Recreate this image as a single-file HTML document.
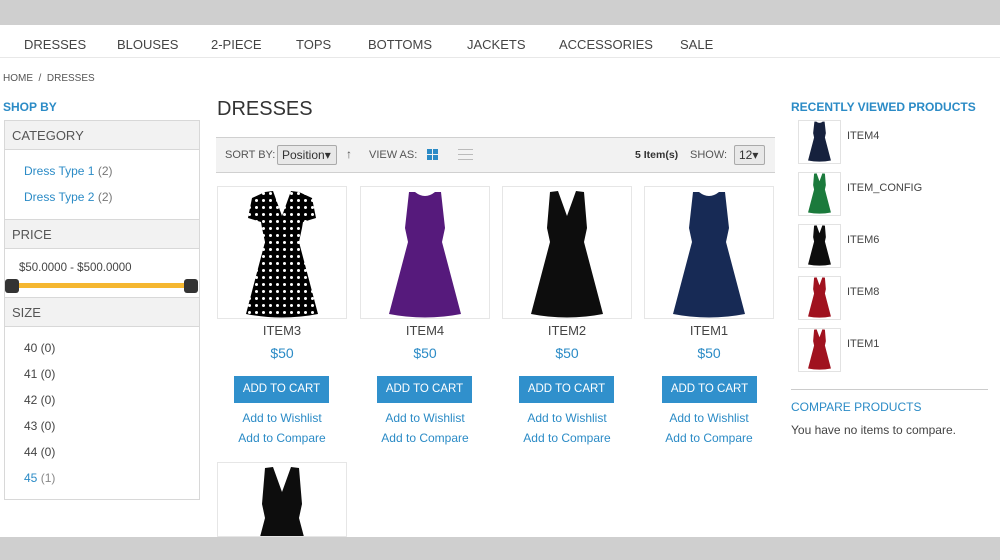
<!DOCTYPE html>
<html><head><meta charset="utf-8"><style>
*{margin:0;padding:0;box-sizing:border-box}
html,body{width:1000px;height:560px;overflow:hidden}
body{background:#fff;font-family:"Liberation Sans",sans-serif;position:relative;color:#444}
.a{position:absolute;white-space:nowrap}
.gray{background:#cfcfcf;left:0;width:1000px;z-index:5}
.nav{font-size:13px;color:#444;top:37px}
.blue{color:#2b8bc6}
.hd{position:absolute;left:5px;width:194px;height:30px;background:#f2f2f2;border-top:1px solid #d8d8d8;border-bottom:1px solid #d8d8d8;font-size:13px;color:#555;padding:7px 0 0 7px}
.sz{font-size:12px;color:#444;left:24px}
.card{position:absolute;top:186px;width:130px;height:133px;border:1px solid #e6e6e6;background:#fff;overflow:hidden}
.nm{font-size:13px;color:#444;text-align:center;width:130px}
.pr{font-size:14px;color:#2b8bc6;text-align:center;width:130px}
.btn{position:absolute;width:95px;height:27px;background:#3090cc;color:#fff;font-size:11.5px;text-align:center;line-height:27px}
.lk{font-size:12px;color:#2b8bc6;text-align:center;width:130px}
.th{position:absolute;left:798px;width:43px;height:44px;border:1px solid #e2e2e2;background:#fff}
.tn{font-size:11px;color:#444;left:847px}
</style></head><body>
<svg width="0" height="0" style="position:absolute"><defs>
<path id="d" d="M33 2 L41 1 L50 26 L59 1 L67 2 L70 38 L67 52 L86 124 Q50 131 14 124 L33 52 L30 38 Z"/>
<path id="r" d="M34 2 L40 2 Q50 10 60 2 L66 2 L70 38 L67 52 L86 124 Q50 131 14 124 L33 52 L30 38 Z"/>
<pattern id="dots" width="7" height="7" patternUnits="userSpaceOnUse"><rect width="7" height="7" fill="#000"/><circle cx="3.5" cy="3.5" r="1.5" fill="#fff"/></pattern>
</defs></svg>
<div class="a gray" style="top:0;height:25px"></div>
<div class="a gray" style="top:537px;height:23px"></div>
<div class="a nav" style="left:24px">DRESSES</div>
<div class="a nav" style="left:117px">BLOUSES</div>
<div class="a nav" style="left:211px">2-PIECE</div>
<div class="a nav" style="left:296px">TOPS</div>
<div class="a nav" style="left:368px">BOTTOMS</div>
<div class="a nav" style="left:467px">JACKETS</div>
<div class="a nav" style="left:559px">ACCESSORIES</div>
<div class="a nav" style="left:680px">SALE</div>
<div class="a" style="top:57px;left:0;width:1000px;height:1px;background:#e8e8e8"></div>
<div class="a" style="top:73px;left:3px;font-size:10px;color:#555">HOME &nbsp;/&nbsp; DRESSES</div>
<div class="a blue" style="top:100px;left:3px;font-size:12px;font-weight:bold">SHOP BY</div>
<div class="a" style="top:120px;left:4px;width:196px;height:380px;border:1px solid #d8d8d8"></div>
<div class="hd" style="top:120px">CATEGORY</div>
<div class="a" style="top:164px;left:24px;font-size:12px"><span class="blue">Dress Type 1</span> <span style="color:#777">(2)</span></div>
<div class="a" style="top:190px;left:24px;font-size:12px"><span class="blue">Dress Type 2</span> <span style="color:#777">(2)</span></div>
<div class="hd" style="top:219px">PRICE</div>
<div class="a" style="top:262px;left:19px;font-size:11.5px;color:#444">$50.0000 - $500.0000</div>
<div class="a" style="top:283px;left:12px;width:180px;height:5px;background:#f5b730"></div>
<div class="a" style="top:279px;left:5px;width:14px;height:14px;background:#333;border-radius:3px"></div>
<div class="a" style="top:279px;left:184px;width:14px;height:14px;background:#333;border-radius:3px"></div>
<div class="hd" style="top:297px">SIZE</div>
<div class="a sz" style="top:341px">40 (0)</div>
<div class="a sz" style="top:367px">41 (0)</div>
<div class="a sz" style="top:393px">42 (0)</div>
<div class="a sz" style="top:419px">43 (0)</div>
<div class="a sz" style="top:445px">44 (0)</div>
<div class="a sz" style="top:471px"><span class="blue">45</span> <span style="color:#888">(1)</span></div>

<div class="a" style="top:98px;left:217px;font-size:20px;color:#333">DRESSES</div>
<div class="a" style="top:137px;left:216px;width:559px;height:36px;background:#f2f2f2;border-top:1px solid #d0d0d0;border-bottom:1px solid #d0d0d0"></div>
<div class="a" style="top:149px;left:225px;font-size:11px;color:#555">SORT BY:</div>
<div class="a" style="top:145px;left:277px;width:60px;height:20px;border:1px solid #aaa;background:#e8e8e8;border-radius:2px;font-size:12px;color:#333;padding:2px 0 0 4px">Position&#9662;</div>
<div class="a" style="top:147px;left:346px;font-size:12px;color:#555">&#8593;</div>
<div class="a" style="top:149px;left:369px;font-size:11px;color:#555">VIEW AS:</div>
<div class="a" style="top:149px;left:427px;width:5px;height:5px;background:#2b8bc6;box-shadow:6px 0 #2b8bc6,0 6px #2b8bc6,6px 6px #2b8bc6"></div>
<div class="a" style="top:149px;left:458px;width:15px;height:1px;background:#bbb;box-shadow:0 5px #bbb,0 10px #bbb"></div>
<div class="a" style="top:149px;left:635px;font-size:10.5px;color:#333;font-weight:bold">5 Item(s)</div>
<div class="a" style="top:149px;left:690px;font-size:11px;color:#555">SHOW:</div>
<div class="a" style="top:145px;left:734px;width:31px;height:20px;border:1px solid #aaa;background:#e8e8e8;border-radius:2px;font-size:12px;color:#333;padding:2px 0 0 4px">12&#9662;</div>

<div class="card" style="left:217px"><svg width="128" height="131" viewBox="0 0 128 131"><path transform="translate(14,3)" d="M33 2 L41 1 L50 26 L59 1 L67 2 L80 8 L84 28 L71 32 L70 38 L67 52 L86 124 Q50 131 14 124 L33 52 L30 38 L29 32 L16 28 L20 8 Z" fill="url(#dots)"/></svg></div>
<div class="card" style="left:360px"><svg width="128" height="131" viewBox="0 0 128 131"><use href="#r" fill="#561a7c" transform="translate(14,3)"/></svg></div>
<div class="card" style="left:502px"><svg width="128" height="131" viewBox="0 0 128 131"><use href="#d" fill="#0d0d0d" transform="translate(14,3)"/></svg></div>
<div class="card" style="left:644px"><svg width="128" height="131" viewBox="0 0 128 131"><use href="#r" fill="#172a55" transform="translate(14,3)"/></svg></div>
<div class="card" style="left:217px;top:462px;height:75px"><svg width="128" height="131" viewBox="0 0 128 131"><use href="#d" fill="#0d0d0d" transform="translate(14,3)"/></svg></div>

<div class="a nm" style="top:323px;left:217px">ITEM3</div>
<div class="a nm" style="top:323px;left:360px">ITEM4</div>
<div class="a nm" style="top:323px;left:502px">ITEM2</div>
<div class="a nm" style="top:323px;left:644px">ITEM1</div>
<div class="a pr" style="top:345px;left:217px">$50</div>
<div class="a pr" style="top:345px;left:360px">$50</div>
<div class="a pr" style="top:345px;left:502px">$50</div>
<div class="a pr" style="top:345px;left:644px">$50</div>
<div class="btn" style="top:376px;left:234px">ADD TO CART</div>
<div class="btn" style="top:376px;left:377px">ADD TO CART</div>
<div class="btn" style="top:376px;left:519px">ADD TO CART</div>
<div class="btn" style="top:376px;left:662px">ADD TO CART</div>
<div class="a lk" style="top:411px;left:217px">Add to Wishlist</div>
<div class="a lk" style="top:411px;left:360px">Add to Wishlist</div>
<div class="a lk" style="top:411px;left:502px">Add to Wishlist</div>
<div class="a lk" style="top:411px;left:644px">Add to Wishlist</div>
<div class="a lk" style="top:431px;left:217px">Add to Compare</div>
<div class="a lk" style="top:431px;left:360px">Add to Compare</div>
<div class="a lk" style="top:431px;left:502px">Add to Compare</div>
<div class="a lk" style="top:431px;left:644px">Add to Compare</div>

<div class="a blue" style="top:100px;left:791px;font-size:12px;font-weight:bold">RECENTLY VIEWED PRODUCTS</div>
<div class="th" style="top:120px"><svg width="41" height="42" viewBox="0 0 100 132"><use href="#r" fill="#16213d"/></svg></div>
<div class="th" style="top:172px"><svg width="41" height="42" viewBox="0 0 100 132"><use href="#d" fill="#1b7a3c"/></svg></div>
<div class="th" style="top:224px"><svg width="41" height="42" viewBox="0 0 100 132"><use href="#d" fill="#0d0d0d"/></svg></div>
<div class="th" style="top:276px"><svg width="41" height="42" viewBox="0 0 100 132"><use href="#d" fill="#a0121f"/></svg></div>
<div class="th" style="top:328px"><svg width="41" height="42" viewBox="0 0 100 132"><use href="#d" fill="#a0121f"/></svg></div>
<div class="a tn" style="top:130px">ITEM4</div>
<div class="a tn" style="top:182px">ITEM_CONFIG</div>
<div class="a tn" style="top:234px">ITEM6</div>
<div class="a tn" style="top:286px">ITEM8</div>
<div class="a tn" style="top:338px">ITEM1</div>
<div class="a" style="top:389px;left:791px;width:197px;height:1px;background:#ccc"></div>
<div class="a blue" style="top:400px;left:791px;font-size:12px">COMPARE PRODUCTS</div>
<div class="a" style="top:423px;left:791px;font-size:12px;color:#444">You have no items to compare.</div>
</body></html>
